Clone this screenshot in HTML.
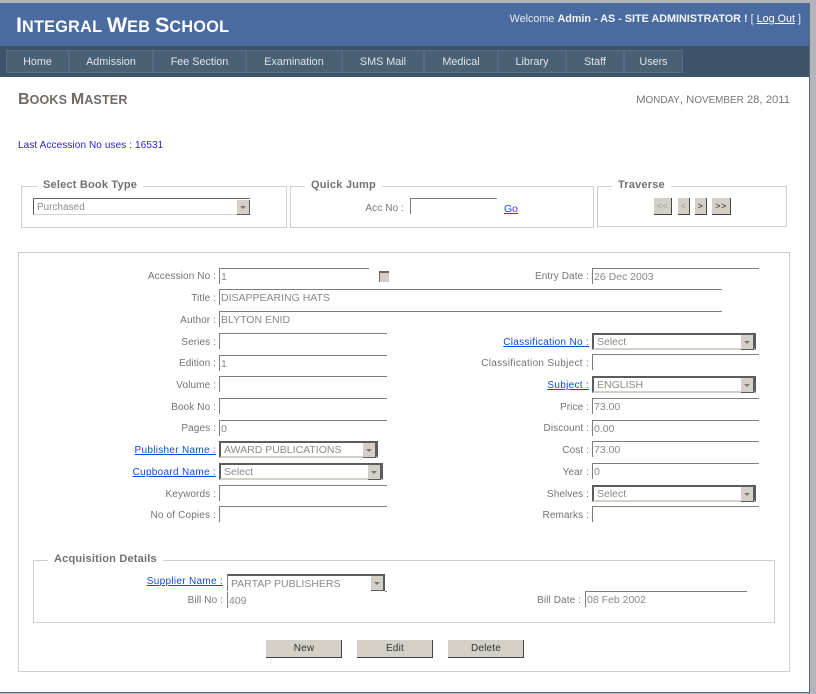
<!DOCTYPE html>
<html><head><meta charset="utf-8"><title>Books Master</title>
<style>
html,body{margin:0;padding:0;background:#b3b3b9;}
body{position:relative;width:816px;height:694px;overflow:hidden;font-family:"Liberation Sans",Arial,sans-serif;font-size:10.5px;color:#77726f;}
div,a,span,fieldset{position:absolute;box-sizing:border-box;white-space:nowrap;}
#page{left:0;top:3px;width:810px;height:690px;background:#fff;border-right:1px solid #566a80;border-bottom:1px solid #566a80;}
#hd{left:0;top:3px;width:809px;height:43px;background:#4a6b9f;}
#band{left:0;top:46px;width:809px;height:31px;background:#3d5369;}
.n{top:50px;height:23px;background:#4a6075;border:1px solid #566c84;color:#dfe4ea;font-size:10.8px;line-height:22px;text-align:center;}
.l{text-align:right;line-height:18px;height:18px;font-size:10px;letter-spacing:.1px;}
.l a,a.lk{position:static;color:#0f4be0;text-decoration:underline;}
.l a{letter-spacing:.3px;}
.i{border-top:1px solid #7d7d7d;border-left:1px solid #7d7d7d;height:16px;padding-left:1px;line-height:17px;color:#8b8784;font-size:10.5px;}
.s{border:2px solid #5c5c5c;border-bottom-color:#d4d0c8;height:17px;padding-left:3px;line-height:14px;color:#8d8986;font-size:10.5px;background:#fff;}
.s b{position:absolute;right:0;top:0;width:12px;height:14px;background:#d4d0c8;border-right:1px solid #5c5c5c;border-bottom:1px solid #5c5c5c;}
.s b:after{content:"";position:absolute;left:3px;top:6px;border:3px solid transparent;border-top:3px solid #777;border-bottom:0;}
.b{border:1px solid #cfcfcf;}
.lg{background:#fff;font-weight:bold;color:#76716e;font-size:11px;padding:0 6px;line-height:14px;letter-spacing:.2px;height:14px;}
.tb{top:198px;height:17px;background:#d4d0c8;border-right:1px solid #444;border-bottom:1px solid #444;font-size:9px;line-height:17px;text-align:center;color:#222;letter-spacing:.5px;}
.btn{top:640px;height:18px;width:76px;background:#d4d0c8;border-right:1px solid #444;border-bottom:1px solid #444;font-size:10px;line-height:17px;text-align:center;color:#333;letter-spacing:.2px;padding-left:1px;}
</style></head><body>
<div id="page"></div>
<div id="hd"></div>
<div id="band"></div>
<div style="left:16px;top:13px;color:#fff;font-weight:bold;font-size:21.5px;line-height:24px;"><span style="position:static">I</span><span style="position:static;font-size:16.2px;letter-spacing:.3px">NTEGRAL </span><span style="position:static">W</span><span style="position:static;font-size:16.2px;letter-spacing:.3px">EB </span><span style="position:static">S</span><span style="position:static;font-size:16.2px;letter-spacing:.3px">CHOOL</span></div>
<div style="right:15px;top:12px;color:#e8ecf2;font-size:10.8px;line-height:14px;">Welcome <b style="color:#f2f4f8">Admin - AS - SITE ADMINISTRATOR !</b> [ <span style="position:static;color:#fff;text-decoration:underline">Log Out</span> ]</div>

<div class="n" style="left:6px;width:63px">Home</div>
<div class="n" style="left:69px;width:84px">Admission</div>
<div class="n" style="left:153px;width:93px">Fee Section</div>
<div class="n" style="left:246px;width:96px">Examination</div>
<div class="n" style="left:342px;width:82px">SMS Mail</div>
<div class="n" style="left:424px;width:74px">Medical</div>
<div class="n" style="left:498px;width:68px">Library</div>
<div class="n" style="left:566px;width:58px">Staff</div>
<div class="n" style="left:624px;width:59px">Users</div>

<div style="left:18px;top:91px;font-weight:bold;font-size:16px;line-height:18px;color:#6f6b68;">B<span style="position:static;font-size:12.5px;letter-spacing:.2px">OOKS </span>M<span style="position:static;font-size:12.5px;letter-spacing:.2px">ASTER</span></div>
<div style="right:26px;top:93px;font-size:11.3px;line-height:14px;color:#7a7775;">M<span style="position:static;font-size:9.9px">ONDAY</span>, N<span style="position:static;font-size:9.9px">OVEMBER</span> 28, 2011</div>
<div style="left:18px;top:139px;font-size:10px;line-height:14px;color:#2a20e0;letter-spacing:.1px">Last Accession No uses : 16531</div>

<div class="b" style="left:21px;top:186px;width:266px;height:42px"></div>
<div class="lg" style="left:37px;top:178px">Select Book Type</div>
<div class="s" style="left:33px;top:198px;width:217px;border-width:1px 0 1px 1px;border-top-color:#666;border-left-color:#555;padding-left:3px;font-size:9.8px;line-height:17px;letter-spacing:.1px">Purchased<b style="top:1px;right:0"></b></div>

<div class="b" style="left:290px;top:186px;width:304px;height:42px"></div>
<div class="lg" style="left:305px;top:178px">Quick Jump</div>
<div class="l" style="left:340px;top:200px;width:64px">Acc No :</div>
<div class="i" style="left:410px;top:198px;width:87px"></div>
<a class="lk" style="position:absolute;left:504px;top:202px;line-height:14px;font-size:10.5px">Go</a>

<div class="b" style="left:597px;top:186px;width:190px;height:41px"></div>
<div class="lg" style="left:612px;top:178px">Traverse</div>
<div class="tb" style="left:654px;width:18px;color:#999">&lt;&lt;</div>
<div class="tb" style="left:678px;width:12px;color:#999">&lt;</div>
<div class="tb" style="left:695px;width:12px">&gt;</div>
<div class="tb" style="left:712px;width:19px">&gt;&gt;</div>

<div class="b" style="left:18px;top:252px;width:772px;height:420px"></div>

<div class="l" style="left:60px;top:268px;width:156px">Accession No :</div><div class="i" style="left:219px;top:268px;width:150px">1</div>
<div style="left:379px;top:271px;width:10px;height:11px;background:#d4d0c8;border-top:2px solid #666;border-left:1px solid #666"></div>
<div class="l" style="left:60px;top:290px;width:156px">Title :</div><div class="i" style="left:219px;top:289px;width:503px">DISAPPEARING HATS</div>
<div class="l" style="left:60px;top:312px;width:156px">Author :</div><div class="i" style="left:219px;top:311px;width:503px">BLYTON ENID</div>
<div class="l" style="left:60px;top:334px;width:156px">Series :</div><div class="i" style="left:219px;top:333px;width:168px"></div>
<div class="l" style="left:60px;top:355px;width:156px">Edition :</div><div class="i" style="left:219px;top:355px;width:168px">1</div>
<div class="l" style="left:60px;top:377px;width:156px">Volume :</div><div class="i" style="left:219px;top:376px;width:168px"></div>
<div class="l" style="left:60px;top:399px;width:156px">Book No :</div><div class="i" style="left:219px;top:398px;width:168px"></div>
<div class="l" style="left:60px;top:420px;width:156px">Pages :</div><div class="i" style="left:219px;top:420px;width:168px">0</div>
<div class="l" style="left:60px;top:442px;width:156px"><a>Publisher Name :</a></div><div class="s" style="left:219px;top:441px;width:159px">AWARD PUBLICATIONS<b></b></div>
<div class="l" style="left:60px;top:464px;width:156px"><a>Cupboard Name :</a></div><div class="s" style="left:219px;top:463px;width:164px">Select<b></b></div>
<div class="l" style="left:60px;top:486px;width:156px">Keywords :</div><div class="i" style="left:219px;top:485px;width:168px"></div>
<div class="l" style="left:60px;top:507px;width:156px;letter-spacing:.15px">No of Copies :</div><div class="i" style="left:219px;top:506px;width:168px"></div>

<div class="l" style="left:430px;top:268px;width:159px">Entry Date :</div><div class="i" style="left:592px;top:268px;width:167px">26 Dec 2003</div>
<div class="l" style="left:430px;top:334px;width:159px"><a>Classification No :</a></div><div class="s" style="left:592px;top:333px;width:164px">Select<b></b></div>
<div class="l" style="left:430px;top:355px;width:159px;letter-spacing:.3px">Classification Subject :</div><div class="i" style="left:592px;top:354px;width:167px"></div>
<div class="l" style="left:430px;top:377px;width:159px"><a>Subject :</a></div><div class="s" style="left:592px;top:376px;width:164px">ENGLISH<b></b></div>
<div class="l" style="left:430px;top:399px;width:159px">Price :</div><div class="i" style="left:592px;top:398px;width:167px">73.00</div>
<div class="l" style="left:430px;top:420px;width:159px">Discount :</div><div class="i" style="left:592px;top:420px;width:167px">0.00</div>
<div class="l" style="left:430px;top:442px;width:159px">Cost :</div><div class="i" style="left:592px;top:441px;width:167px">73.00</div>
<div class="l" style="left:430px;top:464px;width:159px">Year :</div><div class="i" style="left:592px;top:463px;width:167px">0</div>
<div class="l" style="left:430px;top:486px;width:159px">Shelves :</div><div class="s" style="left:592px;top:485px;width:164px">Select<b></b></div>
<div class="l" style="left:430px;top:507px;width:159px">Remarks :</div><div class="i" style="left:592px;top:506px;width:167px"></div>

<div class="b" style="left:33px;top:560px;width:742px;height:63px"></div>
<div class="lg" style="left:48px;top:552px">Acquisition Details</div>
<div class="l" style="left:60px;top:573px;width:163px"><a>Supplier Name :</a></div>
<div class="s" style="left:227px;top:574px;width:158px;border-left:1px solid #7d7d7d;border-bottom:0;border-right:1px solid #5c5c5c;height:17px;padding-left:3px;line-height:17px">PARTAP PUBLISHERS<b></b></div>
<div style="left:385px;top:591px;width:2px;height:1px;background:#7d7d7d"></div>
<div class="l" style="left:60px;top:592px;width:163px">Bill No :</div><div class="i" style="left:227px;top:592px;width:160px;border-top:0;line-height:18px">409</div>
<div class="l" style="left:430px;top:592px;width:151px">Bill Date :</div><div class="i" style="left:585px;top:591px;width:162px;padding-left:1px">08 Feb 2002</div>

<div class="btn" style="left:266px">New</div>
<div class="btn" style="left:357px">Edit</div>
<div class="btn" style="left:448px">Delete</div>
</body></html>
